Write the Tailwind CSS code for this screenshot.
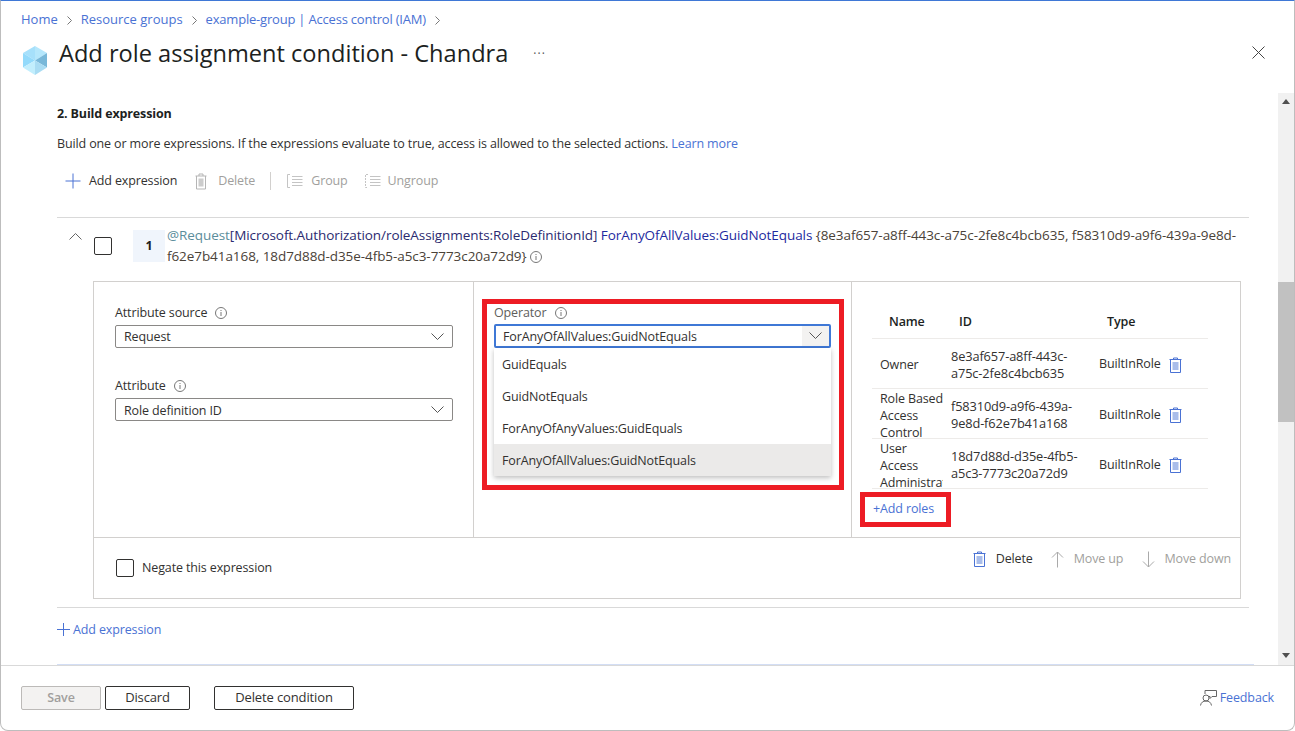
<!DOCTYPE html>
<html><head><meta charset="utf-8"><script src="https://cdn.jsdelivr.net/npm/@tailwindcss/browser@4"></script></head>
<body class="bg-white">
<div class="w-[1295px] h-[731px] flex flex-col overflow-hidden bg-white border border-[#bdbdbd] border-t-[#3f78d6] rounded-b-lg font-['Open_Sans',sans-serif] text-[12.5px] tracking-[-0.13px] text-[#323130]">
  <header class="h-[92px] shrink-0 pl-[20px] pr-[29px]">
    <nav class="flex items-center gap-[7px] h-[38px] text-[13px] tracking-normal text-[#4a72d4]">
      <span>Home</span>
      <svg class="w-[9px] h-[9px]" viewBox="0 0 9 9" fill="none" stroke="#777"><path d="M2.500 .5 6.500 4.500 2.500 8.500"/></svg>
      <span>Resource groups</span>
      <svg class="w-[9px] h-[9px]" viewBox="0 0 9 9" fill="none" stroke="#777"><path d="M2.500 .5 6.500 4.500 2.500 8.500"/></svg>
      <span class="tracking-[-0.2px]">example-group | Access control (IAM)</span>
      <svg class="w-[9px] h-[9px]" viewBox="0 0 9 9" fill="none" stroke="#777"><path d="M2.500 .5 6.500 4.500 2.500 8.500"/></svg>
    </nav>
    <div class="flex items-start h-[40px] -mt-[4px]">
      <svg class="w-[24px] h-[29px] mt-[11px] ml-[2px]" viewBox="0 0 24 29"><path d="M12 0 24 7 12 14.500Z" fill="#b5e7fc"/><path d="M12 0 0 7 12 14.500Z" fill="#a6e0fb"/><path d="M0 7 12 14.500 0 21.500Z" fill="#93dafb"/><path d="M24 7 12 14.500 24 21.500Z" fill="#79b8d9"/><path d="M12 14.500 24 21.500 12 29Z" fill="#a9dcf3"/><path d="M12 14.500 0 21.500 12 29Z" fill="#c2eefd"/></svg>
      <h1 class="ml-[12px] text-[23.600px] leading-[36px] font-medium tracking-normal text-[#201f1e]">Add role assignment condition - Chandra</h1>
      <span class="ml-[25px] mt-[10px] text-[12px] tracking-[1px] text-[#555]">···</span>
      <svg class="ml-auto mt-[11px] w-[13px] h-[13px]" viewBox="0 0 13 13" stroke="#444" fill="none"><path d="M.5.5 12.500 12.500M12.500.5.5 12.500"/></svg>
    </div>
  </header>
  <div class="h-[572px] shrink-0 flex">
    <main class="flex-1 overflow-hidden pl-[56px] pr-[29px]">
      <h2 class="mt-[12px] h-[18px] leading-[18px] font-bold text-[#201f1e]">2. Build expression</h2>
      <p class="mt-[12px] h-[18px] leading-[18px]">Build one or more expressions. If the expressions evaluate to true, access is allowed to the selected actions. <span class="text-[#4a72d4]">Learn more</span></p>
      <div class="mt-[13px] h-[30px] pl-[8px] flex items-center">
        <svg class="w-[16px] h-[16px] mr-[8px]" viewBox="0 0 16 16" stroke="#4a72d4" fill="none"><path d="M8 .5V15.500M.5 8H15.500"/></svg>
        <span>Add expression</span>
        <svg class="ml-[17px] w-[14px] h-[17px] mr-[10px]" viewBox="0 0 14 17" fill="none" stroke="#b5b5b5"><path d="M1.500 3H12.500M5 3V1H9V3M2.500 3V16H11.500V3"/><path d="M4.500 5.500H9.500V13.500H4.500Z" fill="#ccc" stroke="none"/></svg>
        <span class="text-[#a19f9d]">Delete</span>
        <span class="ml-[15px] w-px h-[18px] bg-[#d2d0ce]"></span>
        <svg class="ml-[16px] w-[16px] h-[16px] mr-[8px]" viewBox="0 0 16 16" fill="none" stroke="#c4c4c4"><path d="M3 1.500H.5V14.500H3M5 3.500H15.500M5 6.500H15.500M5 9.500H15.500M5 12.500H15.500"/></svg>
        <span class="text-[#a19f9d]">Group</span>
        <svg class="ml-[17px] w-[16px] h-[16px] mr-[7px]" viewBox="0 0 16 16" fill="none" stroke="#c4c4c4"><path d="M3 1.500H.5V14.500H3" stroke-dasharray="2 1"/><path d="M5 3.500H15.500M5 6.500H15.500M5 9.500H15.500M5 12.500H15.500"/></svg>
        <span class="text-[#a19f9d]">Ungroup</span>
      </div>
      <section class="mt-[21px] border-t border-b border-[#d9d9d9] h-[391px]">
        <div class="flex h-[63px]">
          <svg class="mt-[15px] ml-[12px] w-[13px] h-[7px]" viewBox="0 0 13 7" fill="none" stroke="#666"><path d="M.5 6.500 6.500 .5 12.500 6.500"/></svg>
          <span class="mt-[19px] ml-[12px] w-[18px] h-[18px] border border-[#323130] rounded-[2px]"></span>
          <span class="mt-[12px] ml-[21px] w-[32px] h-[32px] bg-[#f0f5fc] flex items-center justify-center font-bold text-[#201f1e]">1</span>
          <p class="ml-[2px] mt-[7px] whitespace-nowrap leading-[21px] text-[13.500px] tracking-[-0.07px]"><span class="text-[#5b8d9b]">@Request</span><span class="text-[#2b2a70]">[Microsoft.Authorization/roleAssignments:RoleDefinitionId]</span> <span class="text-[#1e2aa0]">ForAnyOfAllValues:GuidNotEquals</span> <span class="text-[#4a4238]">{8e3af657-a8ff-443c-a75c-2fe8c4bcb635, f58310d9-a9f6-439a-9e8d-<br>f62e7b41a168, 18d7d88d-d35e-4fb5-a5c3-7773c20a72d9}</span> <svg class="inline w-[12px] h-[12px] align-[-2px]" viewBox="0 0 12 12" fill="none" stroke="#777"><circle cx="6" cy="6" r="5.500"/><path d="M6 5V9M6 3V4"/></svg></p>
        </div>
        <div class="ml-[36px] w-[1148px] h-[318px] border border-[#d2d0ce] flex flex-col">
          <div class="h-[256px] flex border-b border-[#d2d0ce]">
            <div class="w-[380px] border-r border-[#d2d0ce] pl-[21px] pr-[20px] pt-[22px]">
              <label class="flex items-center h-[18px]">Attribute source<svg class="ml-[8px] w-[12px] h-[12px]" viewBox="0 0 12 12" fill="none" stroke="#777"><circle cx="6" cy="6" r="5.500"/><path d="M6 5V9M6 3V4"/></svg></label>
              <div class="mt-[3px] h-[23px] border border-[#8a8886] rounded-[2px] pl-[8px] pr-[8px] flex items-center justify-between"><span class="pt-[2px]">Request</span><svg class="w-[13px] h-[8px]" viewBox="0 0 13 8" fill="none" stroke="#555"><path d="M.5.5 6.500 6.500 12.500.5"/></svg></div>
              <label class="mt-[29px] flex items-center h-[18px]">Attribute<svg class="ml-[8px] w-[12px] h-[12px]" viewBox="0 0 12 12" fill="none" stroke="#777"><circle cx="6" cy="6" r="5.500"/><path d="M6 5V9M6 3V4"/></svg></label>
              <div class="mt-[3px] h-[23px] border border-[#8a8886] rounded-[2px] pl-[8px] pr-[8px] flex items-center justify-between"><span class="pt-[3px]">Role definition ID</span><svg class="w-[13px] h-[8px]" viewBox="0 0 13 8" fill="none" stroke="#555"><path d="M.5.5 6.500 6.500 12.500.5"/></svg></div>
            </div>
            <div class="relative w-[378px] border-r border-[#d2d0ce] pl-[20px] pr-[20px] pt-[22px]">
              <label class="flex items-center h-[18px] text-[#605e5c]">Operator<svg class="ml-[8px] w-[12px] h-[12px]" viewBox="0 0 12 12" fill="none" stroke="#777"><circle cx="6" cy="6" r="5.500"/><path d="M6 5V9M6 3V4"/></svg></label>
              <div class="mt-[2px] h-[24px] border-2 border-[#3f78d6] rounded-[2px] pl-[7px] flex items-center justify-between"><span class="pt-[3px]">ForAnyOfAllValues:GuidNotEquals</span><span class="w-[27px] h-full bg-[#f3f2f1] flex items-center justify-center"><svg class="w-[13px] h-[8px]" viewBox="0 0 13 8" fill="none" stroke="#555"><path d="M.5.5 6.500 6.500 12.500.5"/></svg></span></div>
              <ul class="relative w-[337px] bg-white shadow-[0_2px_5px_rgba(0,0,0,0.25)]">
                <li class="h-[32px] pl-[8px] pt-[3px] flex items-center">GuidEquals</li>
                <li class="h-[32px] pl-[8px] pt-[3px] flex items-center">GuidNotEquals</li>
                <li class="h-[32px] pl-[8px] pt-[3px] flex items-center">ForAnyOfAnyValues:GuidEquals</li>
                <li class="h-[32px] pl-[8px] pt-[3px] flex items-center bg-[#ebeae9]">ForAnyOfAllValues:GuidNotEquals</li>
              </ul>
              <div class="absolute left-[8px] top-[17px] w-[362px] h-[191px] border-[5px] border-[#ed1c24]"></div>
            </div>
            <div class="relative flex-1 pl-[20px] pt-[21px]">
              <div class="w-[336px]">
                <div class="h-[36px] border-b border-[#edebe9] flex items-center pt-[4px] font-semibold text-[#201f1e]"><span class="w-[79px] pl-[17px]">Name</span><span class="w-[148px] pl-[8px]">ID</span><span class="pl-[8px]">Type</span></div>
                <div class="h-[50px] border-b border-[#edebe9] flex items-center pt-[2px]"><span class="w-[71px] mr-[8px] pl-[8px] overflow-hidden leading-[17px] h-[17px]">Owner</span><span class="w-[148px] pr-[15px] leading-[17px] text-[12.800px]">8e3af657-a8ff-443c-a75c-2fe8c4bcb635</span>BuiltInRole<svg class="ml-[8px] w-[13px] h-[16px]" viewBox="0 0 13 16" fill="none" stroke="#4a72d4"><path d="M.5 2.500H12.500M4.500 2.500V1H8.500V2.500M1.500 2.500V15.500H11.500V2.500"/><path d="M3.500 5H9.500V13H3.500Z" fill="#a9bdea" stroke="none"/></svg></div>
                <div class="h-[50px] border-b border-[#edebe9] flex items-center pt-[3px]"><span class="w-[71px] mr-[8px] pl-[8px] overflow-hidden whitespace-nowrap leading-[17px] h-[51px]">Role Based<br>Access<br>Control</span><span class="w-[148px] pr-[15px] leading-[17px] text-[12.800px]">f58310d9-a9f6-439a-9e8d-f62e7b41a168</span>BuiltInRole<svg class="ml-[8px] w-[13px] h-[16px]" viewBox="0 0 13 16" fill="none" stroke="#4a72d4"><path d="M.5 2.500H12.500M4.500 2.500V1H8.500V2.500M1.500 2.500V15.500H11.500V2.500"/><path d="M3.500 5H9.500V13H3.500Z" fill="#a9bdea" stroke="none"/></svg></div>
                <div class="h-[50px] border-b border-[#edebe9] flex items-center pt-[3px]"><span class="w-[71px] mr-[8px] pl-[8px] overflow-hidden whitespace-nowrap leading-[17px] h-[51px]">User<br>Access<br>Administrator</span><span class="w-[148px] pr-[15px] leading-[17px] text-[12.800px]">18d7d88d-d35e-4fb5-a5c3-7773c20a72d9</span>BuiltInRole<svg class="ml-[8px] w-[13px] h-[16px]" viewBox="0 0 13 16" fill="none" stroke="#4a72d4"><path d="M.5 2.500H12.500M4.500 2.500V1H8.500V2.500M1.500 2.500V15.500H11.500V2.500"/><path d="M3.500 5H9.500V13H3.500Z" fill="#a9bdea" stroke="none"/></svg></div>
              </div>
              <span class="mt-[11px] ml-[1px] block text-[#4a72d4]">+Add roles</span>
              <div class="absolute left-[8px] top-[210px] w-[91px] h-[35px] border-[5px] border-[#ed1c24]"></div>
            </div>
          </div>
          <div class="flex-1 flex pl-[22px] pr-[9px]">
            <label class="flex items-center h-[18px] mt-[21px]"><span class="w-[18px] h-[18px] border border-[#323130] rounded-[2px] mr-[8px]"></span>Negate this expression</label>
            <div class="ml-auto flex items-center h-[18px] mt-[12px]">
              <svg class="w-[13px] h-[16px] mr-[10px]" viewBox="0 0 13 16" fill="none" stroke="#4a72d4"><path d="M.5 2.500H12.500M4.500 2.500V1H8.500V2.500M1.500 2.500V15.500H11.500V2.500"/><path d="M3.500 5H9.500V13H3.500Z" fill="#a9bdea" stroke="none"/></svg>
              <span>Delete</span>
              <svg class="ml-[18px] w-[13px] h-[17px] mr-[10px]" viewBox="0 0 13 17" fill="none" stroke="#aaa"><path d="M6.500 16.500V1M1 6.500 6.500 1 12 6.500"/></svg>
              <span class="text-[#a19f9d]">Move up</span>
              <svg class="ml-[19px] w-[13px] h-[17px] mr-[9px]" viewBox="0 0 13 17" fill="none" stroke="#aaa"><path d="M6.500 .5V16M1 10.500 6.500 16 12 10.500"/></svg>
              <span class="text-[#a19f9d]">Move down</span>
            </div>
          </div>
        </div>
      </section>
      <div class="mt-[13px] flex items-center h-[18px]">
        <svg class="w-[13px] h-[13px] mr-[3px] -mt-[2px]" viewBox="0 0 13 13" fill="none" stroke="#4a72d4"><path d="M6.500 0V13M0 6.500H13"/></svg>
        <span class="text-[#4a72d4]">Add expression</span>
      </div>
      <div class="mt-[25px] mr-[-5px] h-[1px] bg-[#d3def5]"></div>
    </main>
    <aside class="w-[16px] bg-[#f1f1f1] flex flex-col items-center relative">
      <svg class="mt-[6px] w-[8px] h-[5px]" viewBox="0 0 8 5" fill="#505050"><path d="M4 0 8 5H0Z"/></svg>
      <div class="absolute top-[189px] left-0 w-full h-[140px] bg-[#c1c1c1]"></div>
      <svg class="mt-auto mb-[7px] w-[8px] h-[5px]" viewBox="0 0 8 5" fill="#505050"><path d="M4 5 8 0H0Z"/></svg>
    </aside>
  </div>
  <footer class="flex-1 border-t border-[#d9d9d9] flex items-center pl-[20px] pr-[20px]">
    <button class="w-[80px] h-[24px] bg-[#f3f2f1] border border-[#bcbab8] rounded-[2px] font-semibold text-[#a19f9d]">Save</button>
    <button class="ml-[4px] w-[85px] h-[24px] border border-[#323130] rounded-[2px] text-[13px] font-medium">Discard</button>
    <button class="ml-[24px] w-[140px] h-[24px] border border-[#323130] rounded-[2px] text-[13px] font-medium">Delete condition</button>
    <div class="ml-auto flex items-center text-[#4a72d4]">
      <svg class="w-[17px] h-[16px] mr-[3px]" viewBox="0 0 17 16" fill="none" stroke="#666"><path d="M5 4V.5H16.500V6.500H12L10 8.500V6.500H9"/><circle cx="6" cy="8" r="3"/><path d="M.5 15.500C1 12.500 3 11 6 11S11 12.500 11.500 15.500"/></svg>
      <span>Feedback</span>
    </div>
  </footer>
</div>
</body></html>
